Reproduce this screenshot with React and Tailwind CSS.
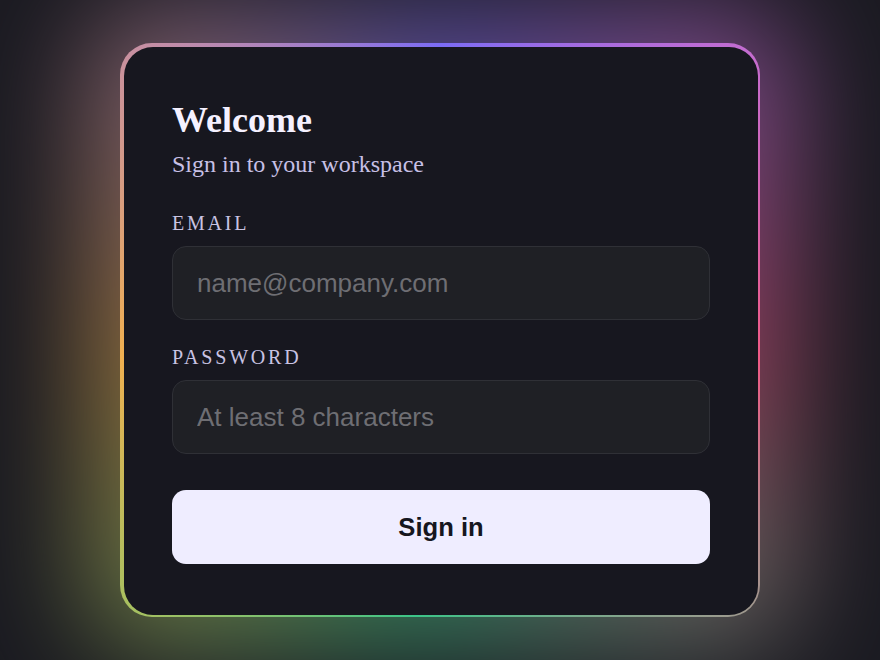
export default function App() {
  return (
    <div className="min-h-screen w-full bg-[#1a1a21] flex items-center justify-center overflow-hidden">
      <div className="relative w-[640px]">
        {/* glow behind the card */}
        <div className="absolute -inset-[36px] rounded-[60px] opacity-55 blur-[56px] bg-[conic-gradient(from_0deg,#7c6cf5_0deg,#c46cd0_48deg,#f05a86_95deg,#a0988e_132deg,#3cc488_185deg,#a8c060_228deg,#f0b050_265deg,#c890a0_312deg,#7c6cf5_360deg)]" />
        <div className="relative rounded-[32px] pt-[4px] pl-[4px] pr-[2px] pb-[2px] bg-[conic-gradient(from_0deg,#7c6cf5_0deg,#c46cd0_48deg,#f05a86_95deg,#a0988e_132deg,#3cc488_185deg,#a8c060_228deg,#f0b050_265deg,#c890a0_312deg,#7c6cf5_360deg)]">
          <div className="rounded-[29px] bg-[#17171f] px-12 pt-[47px] pb-[51px]">
            <h1 className="font-['Liberation_Serif',serif] text-[36px] leading-[52px] font-bold text-[#f5f1ff]">
              Welcome
            </h1>
            <p className="mt-[4px] font-['Liberation_Serif',serif] text-[24px] leading-[28px] text-[#c7c0e6]">
              Sign in to your workspace
            </p>

            <Field label="Email" placeholder="name@company.com" type="email" className="mt-[31px]" />
            <Field label="Password" placeholder="At least 8 characters" type="password" className="mt-[23px]" />

            <button className="mt-9 w-full h-[74px] rounded-[14px] bg-[#efedff] font-['Liberation_Sans',Arial,sans-serif] text-[25.6px] font-bold text-[#16161e]">
              Sign in
            </button>
          </div>
        </div>
      </div>
    </div>
  )
}

function Field({ label, placeholder, type, className }) {
  return (
    <div className={className}>
      <label className="block font-['Liberation_Serif',serif] text-[20px] leading-[28px] uppercase tracking-[0.14em] text-[#c9c3e3]">
        {label}
      </label>
      <input
        type={type}
        placeholder={placeholder}
        className="mt-[9px] block w-full h-[74px] rounded-[14px] border border-[#2f3036] bg-[#1f2025] px-6 font-['Liberation_Sans',Arial,sans-serif] text-[26px] text-[#e8e6f0] placeholder:text-[#6e6e73] outline-none"
      />
    </div>
  )
}
